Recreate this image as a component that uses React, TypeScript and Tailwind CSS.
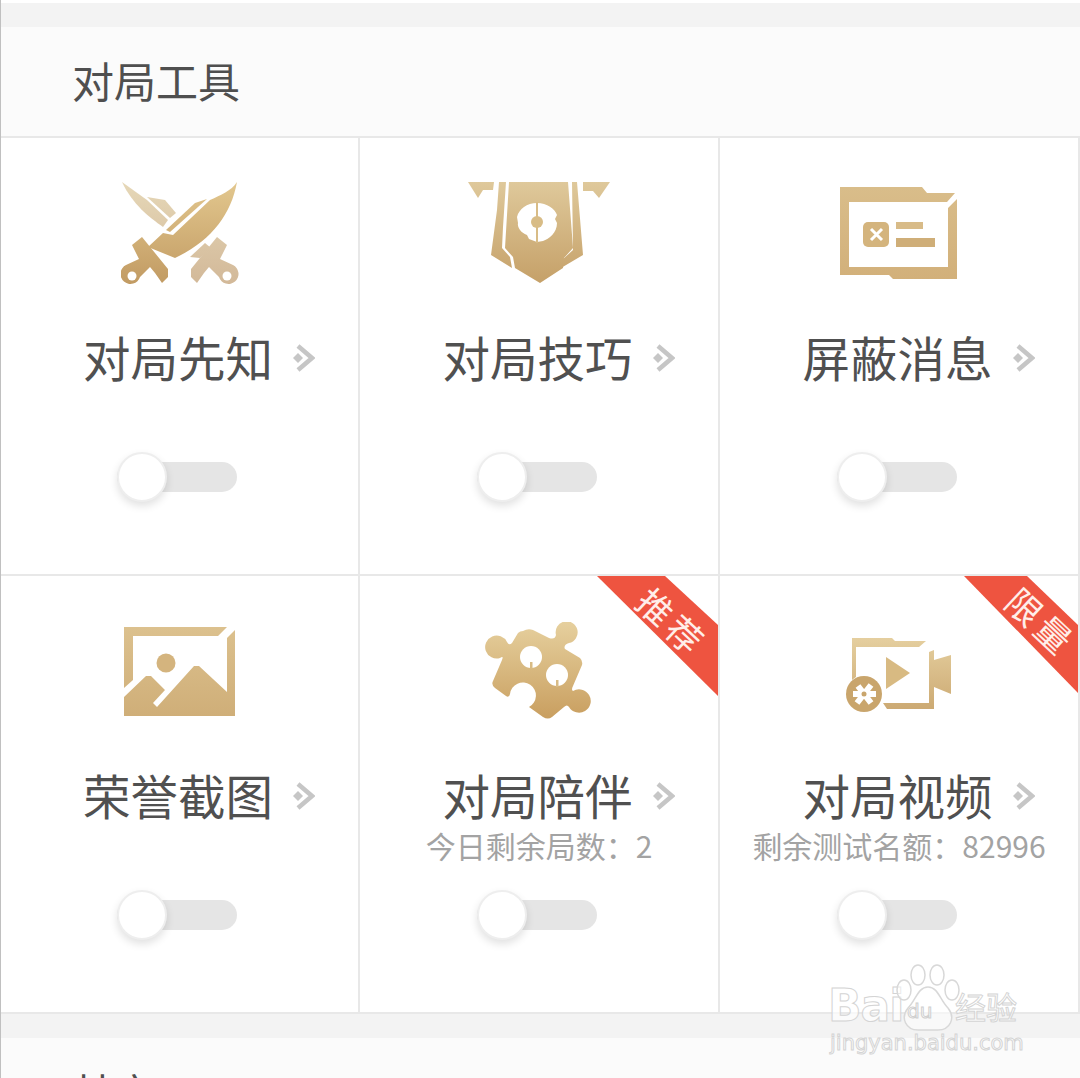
import type { ReactNode } from "react";

const font = "font-['Noto_Sans_CJK_SC','Liberation_Sans',sans-serif]";

function Gradient({ id, from = "#dfc99b", to = "#c5a068", y2 = 100 }: { id: string; from?: string; to?: string; y2?: number }) {
  return (
    <defs>
      <linearGradient id={id} gradientUnits="userSpaceOnUse" x1="0" y1="0" x2="0" y2={y2}>
        <stop offset="0" stopColor={from} />
        <stop offset="1" stopColor={to} />
      </linearGradient>
    </defs>
  );
}

function SwordsIcon() {
  const handle = "M11 64 L21 56 L47 88 L47 96 L41 102 L34 92 L29 86 L19 96 A10 10 0 1 1 5 84 L18 78 Z";
  return (
    <svg width="118" height="106" viewBox="0 0 118 106">
      <Gradient id="sw1" from="#e6d8b8" to="#d2b898" y2={105} />
      <Gradient id="sw2" from="#e3c88f" to="#c19a62" y2={105} />
      <path d="M1 1 L26 19 L47 39 L42 46 C28 36 12 24 1 1 Z" fill="url(#sw1)" />
      <path d="M26 16 L44 19 L55 32 L49 37 Z" fill="url(#sw1)" />
      <path d="M69 76 L84 62 L90 67 L79 77 Z" fill="url(#sw1)" />
      <g transform="translate(117 0) scale(-1 1)">
        <path d={handle} fill="url(#sw1)" />
        <circle cx="11" cy="95" r="4.5" fill="#fff" />
      </g>
      <path d="M116 1 C110 10 100 14 89 19 L52 54 L42 52 L27 66 L54 77 C90 60 110 34 116 1 Z" fill="url(#sw2)" />
      <path d="M45 49 L74 22 L86 18 L49 51 Z" fill="url(#sw2)" />
      <path d={handle} fill="url(#sw2)" />
      <circle cx="11" cy="95" r="4.5" fill="#fff" />
    </svg>
  );
}

function BannerIcon() {
  return (
    <svg width="144" height="104" viewBox="0 0 144 104">
      <Gradient id="bn" y2={103} />
      <path d="M1 1 H27 L26 9 H16 L11 17 Z" fill="url(#bn)" />
      <path d="M143 1 H116 L116 10 H126 L132 17 Z" fill="url(#bn)" />
      <path d="M32 1 H39 L36 46 L35 67 L43 76 L45 87 L24 74 L30 29 Z" fill="url(#bn)" />
      <path d="M105 1 H110 L116 74 L94 87 L95 79 L106 69 Z" fill="url(#bn)" />
      <path d="M42 1 H101 L106 67 L97 77 L96 87 L73 102 L48 87 L46 76 L38 67 Z" fill="url(#bn)" />
      <path d="M70 22 C80 22 88 28 90 34 L88 38 L90 42 C90 52 82 58 76 60 L70 61 L62 58 L60 54 C54 52 50 46 51 42 L50 36 C52 28 60 22 70 22 Z" fill="#fff" />
      <circle cx="70" cy="41" r="6" fill="#d8bc86" />
      <rect x="69" y="21" width="2" height="41" fill="#d8bc86" />
    </svg>
  );
}

function BlockIcon() {
  return (
    <svg width="118" height="92" viewBox="0 0 118 92">
      <Gradient id="bk" from="#d9bd8a" to="#d2b07a" y2={92} />
      <path d="M0 0 H82 L87 6 H115 L107 15 H9 V80 H108 V21 L117 12 V92 H53 L49 88 H0 Z" fill="url(#bk)" />
      <rect x="23" y="35" width="26" height="25" rx="5" fill="#d4b47d" />
      <path d="M31 42 L42 53 M42 42 L31 53" stroke="#fff" strokeWidth="3" />
      <rect x="56" y="35" width="27" height="7" fill="#d8bb88" />
      <rect x="56" y="51" width="39" height="9" fill="#cfae78" />
    </svg>
  );
}

function PictureIcon() {
  return (
    <svg width="112" height="90" viewBox="0 0 112 90">
      <Gradient id="pc" from="#dcc18e" to="#cfae78" y2={90} />
      <path d="M0 0 H103 L94 9 H9 V53 L0 61 Z" fill="url(#pc)" />
      <path d="M111 3 V89 H0 V70 L22 49 H27 L41 63 L29 76 L33 80 L70 39 H75 L103 65 V11 Z" fill="url(#pc)" />
      <circle cx="42" cy="36" r="9.5" fill="#d4b47e" />
    </svg>
  );
}

function PuzzleIcon() {
  return (
    <svg width="108" height="98" viewBox="0 0 108 98">
      <Gradient id="pz" from="#e6d09e" to="#c99f60" y2={96} />
      <path
        d="M38 9 Q43 6 48 8 L64 16 Q70 18 71 13 A11 11 0 1 1 84 21 Q78 23 80 27 L95 36 Q98 39 97 43 L88 64 Q86 68 88 69 A11.7 11.7 0 1 1 84 85 Q82 82 79 85 L67 95 Q63 98 58 95 L44 85 A13 13 0 1 0 25 72 Q24 76 21 74 L10 66 Q6 63 8 59 L17 38 Q19 33 15 36 A11.5 11.5 0 1 1 22 20 Q24 24 27 21 L33 11 Q35 9 38 9 Z"
        fill="url(#pz)"
      />
      <circle cx="46" cy="35" r="11" fill="#fff" />
      <circle cx="72" cy="53" r="11" fill="#fff" />
      <rect x="45" y="40" width="2.5" height="7" fill="#d8bb85" />
      <rect x="71" y="58" width="2.5" height="7" fill="#d8bb85" />
    </svg>
  );
}

function VideoIcon() {
  return (
    <svg width="106" height="75" viewBox="0 0 106 75">
      <Gradient id="vd" from="#e5cf9f" to="#cba871" y2={74} />
      <path d="M6 0 H46 L49 3 H80 L73 9 H10 V39 L6 42 Z" fill="url(#vd)" />
      <path d="M37 65 H83 V14 L88 12 V22 L105 17 V56 L88 49 V71 H41 Z" fill="url(#vd)" />
      <path d="M40 19 L64 35 L40 51 Z" fill="#d8ba82" />
      <circle cx="18" cy="56" r="18" fill="#c9a56c" />
      <path d="M12 48 L25 65 M25 47 L11 65 M7 56 H30" stroke="#fff" strokeWidth="6" />
      <circle cx="18" cy="56" r="2.5" fill="#c9a56c" />
    </svg>
  );
}

function DoubleChevron() {
  return (
    <svg width="22" height="28" viewBox="0 0 22 28" className="absolute left-full top-[11px] ml-[20px]">
      <path d="M5 2 L19 14 L5 26" fill="none" stroke="#c6c6c6" strokeWidth="4.5" />
      <path d="M0 14 L5 9 L10 14 L5 19 Z" fill="#c6c6c6" />
    </svg>
  );
}

function Toggle() {
  return (
    <div className="relative mr-[5px] h-[30px] w-[120px] rounded-full bg-[#e5e5e5]">
      <div className="absolute left-0 top-[-10px] h-[50px] w-[50px] rounded-full border-2 border-[#eeeeee] bg-white shadow-[0_4px_8px_rgba(0,0,0,0.12)]" />
    </div>
  );
}

type Tag = { label: string; w: number; cls: string; path: string };

function Ribbon({ tag }: { tag: Tag }) {
  return (
    <div className="absolute right-0 top-0">
      <svg width={tag.w} height="120" viewBox={`0 0 ${tag.w} 120`} className="block">
        <path d={tag.path} fill="#ee5440" />
      </svg>
      <span className={`absolute -translate-x-1/2 -translate-y-1/2 rotate-[43deg] whitespace-nowrap leading-none text-[#ffeee9] ${tag.cls}`}>
        {tag.label}
      </span>
    </div>
  );
}

type Tool = { name: string; icon: ReactNode; pad: string; sub?: string; tag?: Tag };

const tools: Tool[] = [
  { name: "对局先知", icon: <SwordsIcon />, pad: "pt-[43px]" },
  { name: "对局技巧", icon: <BannerIcon />, pad: "pt-[43px]" },
  { name: "屏蔽消息", icon: <BlockIcon />, pad: "pt-[49px]" },
  { name: "荣誉截图", icon: <PictureIcon />, pad: "pt-[51px]" },
  {
    name: "对局陪伴",
    icon: <PuzzleIcon />,
    pad: "pt-[46px]",
    sub: "今日剩余局数：2",
    tag: { label: "推荐", w: 121, cls: "left-[76px] top-[45px] text-[35px] tracking-[5px]", path: "M0 0 H68 L121 49 V120 Z" },
  },
  {
    name: "对局视频",
    icon: <VideoIcon />,
    pad: "pt-[62px]",
    sub: "剩余测试名额：82996",
    tag: { label: "限量", w: 114, cls: "left-[78px] top-[45px] text-[35px] tracking-[5px]", path: "M0 0 H63 L114 49 V117 Z" },
  },
];

function ToolCell({ tool }: { tool: Tool }) {
  return (
    <div className="relative flex h-[436px] flex-col items-center bg-white">
      {tool.tag && <Ribbon tag={tool.tag} />}
      <div className={`h-[195px] ${tool.pad}`}>{tool.icon}</div>
      <div className="relative mr-[3px] text-[47.5px] leading-[48px] text-[#505050]">
        {tool.name}
        <DoubleChevron />
      </div>
      <div className="h-[81px] pt-[11px] text-[30px] leading-[30px] text-[#a3a3a3]">{tool.sub}</div>
      <Toggle />
    </div>
  );
}

function Watermark() {
  const outline = "text-white/70 [-webkit-text-stroke:1px_#d4d4d4]";
  return (
    <div className={`absolute left-[827px] top-[962px] h-[96px] w-[200px] font-['DejaVu_Sans',sans-serif] ${outline}`}>
      <span className="absolute left-0 top-[20px] text-[44px] font-bold leading-[48px] tracking-[-1px]">Bai</span>
      <svg width="72" height="74" viewBox="0 0 72 74" className="absolute left-[68px] top-0">
        <g fill="#ffffff" fillOpacity="0.5" stroke="#d8d8d8" strokeWidth="1.5">
          <ellipse cx="22" cy="13" rx="7" ry="10" />
          <ellipse cx="41" cy="13" rx="7" ry="10" />
          <ellipse cx="8" cy="28" rx="7" ry="10" />
          <ellipse cx="56" cy="28" rx="7" ry="10" />
          <path d="M32 25 C42 25 44 38 52 46 C60 56 54 68 42 68 H22 C10 68 4 56 12 46 C20 38 22 25 32 25 Z" />
        </g>
      </svg>
      <span className="absolute left-[79px] top-[37px] text-[20px] leading-[24px] [-webkit-text-stroke:1px_#cfcfcf]">du</span>
      <span className={`absolute left-[127px] top-[27px] text-[31px] leading-[34px] ${font}`}>经验</span>
      <span className="absolute left-[2px] top-[68px] whitespace-nowrap text-[21px] leading-[26px]">jingyan.baidu.com</span>
    </div>
  );
}

export default function App() {
  return (
    <div className={`relative h-[1078px] w-[1080px] overflow-hidden border-l border-[#c0c0c0] bg-white pt-[3px] ${font}`}>
      <div className="h-6 bg-[#f3f3f3]" />
      <div className="flex h-[111px] items-center border-b-2 border-[#e8e8e8] bg-[#fbfbfb] pb-[5px] pl-[71px] text-[42px] text-[#4f4f4f]">
        对局工具
      </div>
      <div className="grid grid-cols-[357px_358px_358px_1px] gap-x-[2px] gap-y-[2px] bg-[#e8e8e8] pb-[2px]">
        {tools.slice(0, 3).map((t) => (
          <ToolCell key={t.name} tool={t} />
        ))}
        <div />
        {tools.slice(3).map((t) => (
          <ToolCell key={t.name} tool={t} />
        ))}
        <div />
      </div>
      <div className="h-6 bg-[#f3f3f3]" />
      <div className="flex h-[111px] items-center bg-[#fbfbfb] pb-[5px] pl-[71px] text-[42px] text-[#4f4f4f]">其它</div>
      <Watermark />
    </div>
  );
}
